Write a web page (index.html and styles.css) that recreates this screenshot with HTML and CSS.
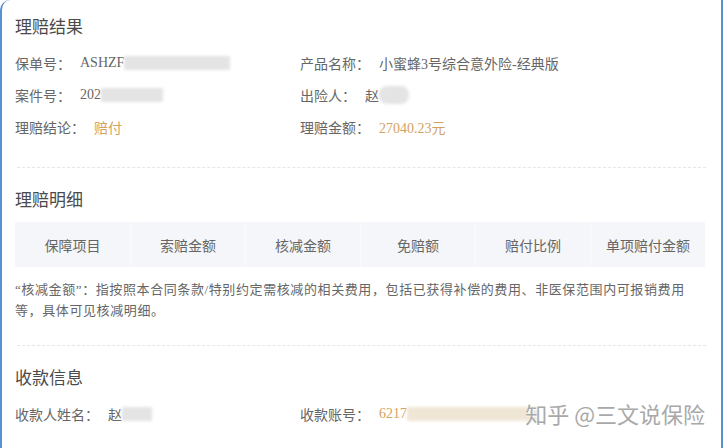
FILE: index.html
```html
<!DOCTYPE html>
<html lang="zh-CN">
<head>
    <meta charset="UTF-8">
    <meta name="viewport" content="width=device-width, initial-scale=1.0">
    <title>理赔结果</title>
    <link rel="stylesheet" href="styles.css">
</head>
<body>
    <div class="card">
        <!-- 理赔结果 -->
        <div class="section">
            <h3 class="section-title">理赔结果</h3>
            <div class="info-grid">
                <div class="info-item">
                    <span class="label">保单号：</span>
                    <span class="value">ASHZF<span class="mask mask-policy"></span></span>
                </div>
                <div class="info-item">
                    <span class="label">产品名称：</span>
                    <span class="value">小蜜蜂3号综合意外险-经典版</span>
                </div>
                <div class="info-item">
                    <span class="label">案件号：</span>
                    <span class="value">202<span class="mask mask-case"></span></span>
                </div>
                <div class="info-item">
                    <span class="label">出险人：</span>
                    <span class="value">赵<span class="mask mask-name"></span></span>
                </div>
                <div class="info-item">
                    <span class="label">理赔结论：</span>
                    <span class="value highlight">赔付</span>
                </div>
                <div class="info-item">
                    <span class="label">理赔金额：</span>
                    <span class="value highlight">27040.23元</span>
                </div>
            </div>
        </div>

        <!-- 理赔明细 -->
        <div class="section">
            <h3 class="section-title">理赔明细</h3>
            <div class="detail-table">
                <div class="cell">保障项目</div>
                <div class="cell">索赔金额</div>
                <div class="cell">核减金额</div>
                <div class="cell">免赔额</div>
                <div class="cell">赔付比例</div>
                <div class="cell">单项赔付金额</div>
            </div>
            <p class="note">“核减金额”：指按照本合同条款/特别约定需核减的相关费用，包括已获得补偿的费用、非医保范围内可报销费用等，具体可见核减明细。</p>
        </div>

        <!-- 收款信息 -->
        <div class="section last">
            <h3 class="section-title">收款信息</h3>
            <div class="info-grid">
                <div class="info-item">
                    <span class="label">收款人姓名：</span>
                    <span class="value">赵<span class="mask mask-payee"></span></span>
                </div>
                <div class="info-item">
                    <span class="label">收款账号：</span>
                    <span class="value highlight">6217<span class="mask mask-account"></span></span>
                </div>
            </div>
        </div>

        <div class="watermark">知乎 @三文说保险</div>
    </div>
</body>
</html>
```

FILE: styles.css
```css
body {
    margin: 0;
    padding: 0;
    background-color: #fff;
    font-family: "Liberation Serif", "Noto Sans CJK SC", serif;
    color: #666;
}
.card {
    position: relative;
    height: 448px;
    box-sizing: border-box;
    padding: 0 15px;
    border-left: 2px solid #5a8fd3;
    border-right: 2px solid #5a8fd3;
    border-top-left-radius: 10px;
    overflow: hidden;
}
.section {
    padding-bottom: 24px;
    border-bottom: 1px dashed #e6e6e6;
}
.section.last {
    border-bottom: none;
}
.section-title {
    margin: 16px 0 7px;
    margin-left: -2px;
    font-size: 17px;
    font-weight: normal;
    line-height: 24px;
    color: #4a4a4a;
}
.section + .section .section-title {
    margin-top: 21px;
}
.info-grid {
    display: grid;
    grid-template-columns: 285px 1fr;
}
.info-item {
    display: flex;
    align-items: center;
    height: 32px;
    font-size: 14px;
    margin-left: -2px;
}
.label {
    margin-right: 9px;
    white-space: nowrap;
}
.value {
    display: flex;
    align-items: center;
    white-space: nowrap;
}
.highlight {
    color: #d4a25f;
}
.mask {
    display: inline-block;
    height: 14px;
    background-color: #e4e4e4;
    filter: blur(1.5px);
}
.mask-policy { width: 106px; }
.mask-case { width: 62px; }
.mask-name { width: 30px; height: 18px; border-radius: 8px; }
.mask-payee { width: 30px; }
.mask-account {
    width: 130px;
    background-color: #efe6d6;
}
.detail-table {
    display: grid;
    grid-template-columns: repeat(6, 1fr);
    margin: 9px 0 0 -2px;
    width: 690px;
    height: 45px;
    background-color: #f5f6f9;
}
.cell {
    display: flex;
    align-items: center;
    justify-content: center;
    font-size: 14px;
    color: #666;
    border-left: 1px solid #fbfbfd;
}
.cell:first-child {
    border-left: none;
}
.note {
    margin: 12px 0 0 -2px;
    font-size: 13px;
    line-height: 21px;
    letter-spacing: 0.6px;
    color: #666;
    width: 690px;
}
.watermark {
    position: absolute;
    right: 16px;
    top: 398px;
    font-family: "Noto Sans CJK SC", sans-serif;
    font-size: 22px;
    line-height: 30px;
    color: #a9a9a9;
    text-shadow: 0 0 1px #fff, 1px 1px 0 #fff;
}
```
